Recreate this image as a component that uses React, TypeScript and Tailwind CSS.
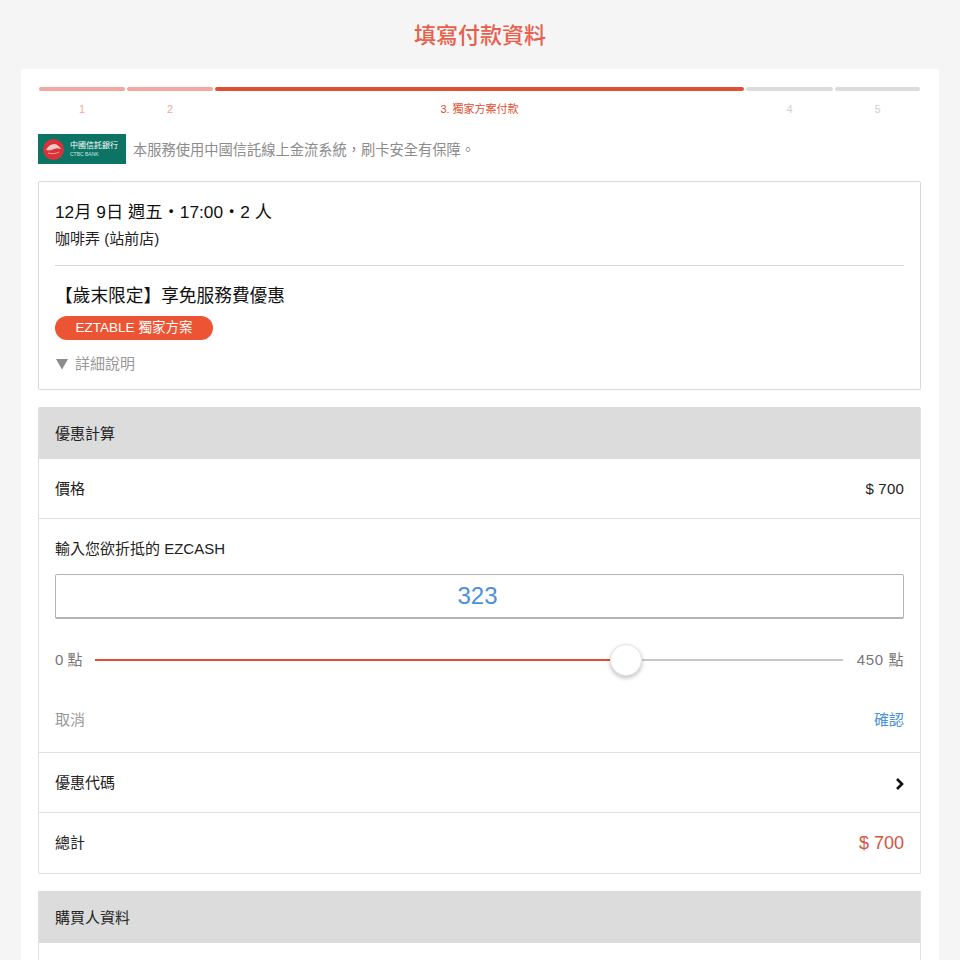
const font = { fontFamily: '"Liberation Sans", "Noto Sans CJK TC", sans-serif' };

const steps = [
  { label: '1', width: 'w-[86px]', bar: 'bg-[#f0a8a0]', text: 'text-[#f0a8a0]' },
  { label: '2', width: 'w-[86px]', bar: 'bg-[#f0a8a0]', text: 'text-[#f0a8a0]' },
  { label: '3. 獨家方案付款', width: 'flex-1', bar: 'bg-[#de4f35]', text: 'text-[#de4f35]' },
  { label: '4', width: 'w-[87px]', bar: 'bg-[#dcdcdc]', text: 'text-[#d0d0d0]' },
  { label: '5', width: 'w-[85px]', bar: 'bg-[#dcdcdc]', text: 'text-[#d0d0d0]' },
];

function Steps() {
  return (
    <div className="flex gap-[2px] pl-[1px] pr-[1px]">
      {steps.map(s => (
        <div key={s.label} className={s.width}>
          <div className={`h-[4px] rounded-full ${s.bar}`} />
          <div className={`mt-[11px] text-center text-[11px] leading-[14px] ${s.text}`}>{s.label}</div>
        </div>
      ))}
    </div>
  );
}

function BankLogo() {
  return (
    <div className="w-[88px] h-[30px] bg-[#0b7465] flex items-center pl-[5px] gap-[6px] shrink-0">
      <svg width="21" height="21" viewBox="0 0 21 21">
        <circle cx="10.5" cy="10.5" r="10.5" fill="#d8323a" />
        <path d="M3 11c2-4 5-6 8-6s5 2 7 5c-3-1-5-1-7 0s-5 2-8 1z" fill="#f4c9c4" />
        <path d="M5 14c3 1 8 1 11-1" stroke="#f0a0a0" strokeWidth="1" fill="none" />
      </svg>
      <div className="text-white">
        <div className="text-[8px] leading-[10px] whitespace-nowrap">中國信託銀行</div>
        <div className="text-[5px] leading-[7px] whitespace-nowrap text-[#cfe6e2]">CTBC BANK</div>
      </div>
    </div>
  );
}

function SectionHeader({ title }: { title: string }) {
  return (
    <div className="h-[52px] bg-[#dcdcdc] px-[16px] pt-[3px] flex items-center text-[15px] text-[#222]">{title}</div>
  );
}

function Slider() {
  return (
    <div className="flex items-center mt-[25px] h-[32px] text-[15px] text-[#777]">
      <span className="w-[40px] shrink-0">0 點</span>
      <div className="flex-1 relative h-[2px] bg-[#c8c8c8]">
        <div className="h-full w-[71%] bg-[#de4f35]" />
        <div className="absolute left-[71%] top-[-15px] -ml-[16px] w-[32px] h-[32px] rounded-full bg-white border border-[#e6e6e6] shadow-[0_2px_4px_rgba(0,0,0,0.25)]" />
      </div>
      <span className="w-[61px] shrink-0 text-right tracking-[0.6px]">450 點</span>
    </div>
  );
}

export default function App() {
  return (
    <div className="h-[960px] overflow-hidden bg-[#f5f5f5]" style={font}>
      <h1 className="h-[69px] pt-[1px] flex items-center justify-center text-[22px] font-medium text-[#e8604c]">
        填寫付款資料
      </h1>

      <div className="mx-[21px] bg-white pl-[17px] pr-[18px] pt-[18px] pb-[20px]">
        <Steps />

        <div className="flex items-center gap-[7px] mt-[18px]">
          <BankLogo />
          <span className="pt-[3px] text-[14.25px] text-[#8c8c8c]">本服務使用中國信託線上金流系統，刷卡安全有保障。</span>
        </div>

        <div className="mt-[17px] h-[209px] border border-[#d8d8d8] rounded-[2px] px-[16px]">
          <div className="pt-[18px] text-[17.3px] leading-[24px] text-[#111]">12月 9日 週五・17:00・2 人</div>
          <div className="mt-[5px] text-[15px] leading-[20px] text-[#222]">咖啡弄 (站前店)</div>
          <div className="mt-[16px] h-px bg-[#d8d8d8]" />
          <div className="mt-[18px] text-[17.7px] leading-[24px] text-[#111]">【歲末限定】享免服務費優惠</div>
          <div className="mt-[8px] w-[158px] h-[24px] rounded-full bg-[#ed5434] text-white text-[13.5px] flex items-center justify-center">
            EZTABLE 獨家方案
          </div>
          <div className="mt-[14px] flex items-center gap-[6px] text-[15px] leading-[20px] text-[#999]">
            <svg width="14" height="12" viewBox="0 0 14 12">
              <path d="M1 1h12L7 11.5z" fill="#8c8c8c" />
            </svg>
            詳細說明
          </div>
        </div>

        <div className="mt-[17px] border border-[#e0e0e0] border-t-0 rounded-[2px]">
          <SectionHeader title="優惠計算" />
          <div className="h-[60px] px-[16px] pt-[2px] flex items-center justify-between text-[15px] text-[#222] border-b border-[#e0e0e0]">
            <span>價格</span>
            <span className="text-[15px] tracking-[0.2px]">$ 700</span>
          </div>
          <div className="h-[234px] px-[16px] pt-[20px] border-b border-[#e0e0e0]">
            <div className="text-[15px] leading-[20px] text-[#222]">輸入您欲折抵的 EZCASH</div>
            <div className="mt-[15px] h-[45px] pr-[4px] border border-[#b4b4b4] border-b-2 rounded-[2px] flex items-center justify-center text-[24px] text-[#4a90d9]">
              323
            </div>
            <Slider />
            <div className="mt-[34px] flex justify-between text-[15px] leading-[20px]">
              <span className="text-[#999]">取消</span>
              <span className="text-[#4a90d9]">確認</span>
            </div>
          </div>
          <div className="h-[60px] px-[16px] pt-[2px] flex items-center justify-between text-[15px] text-[#222] border-b border-[#e0e0e0]">
            <span>優惠代碼</span>
            <svg width="9" height="14" viewBox="0 0 9 14" fill="none">
              <path d="M2 2l5 5-5 5" stroke="#111" strokeWidth="2.6" />
            </svg>
          </div>
          <div className="h-[60px] px-[16px] flex items-center justify-between text-[15px] text-[#222]">
            <span>總計</span>
            <span className="text-[18px] text-[#d6533f]">$ 700</span>
          </div>
        </div>

        <div className="mt-[17px] border border-[#e0e0e0] border-t-0">
          <SectionHeader title="購買人資料" />
          <div className="h-[60px]" />
        </div>
      </div>
    </div>
  );
}
